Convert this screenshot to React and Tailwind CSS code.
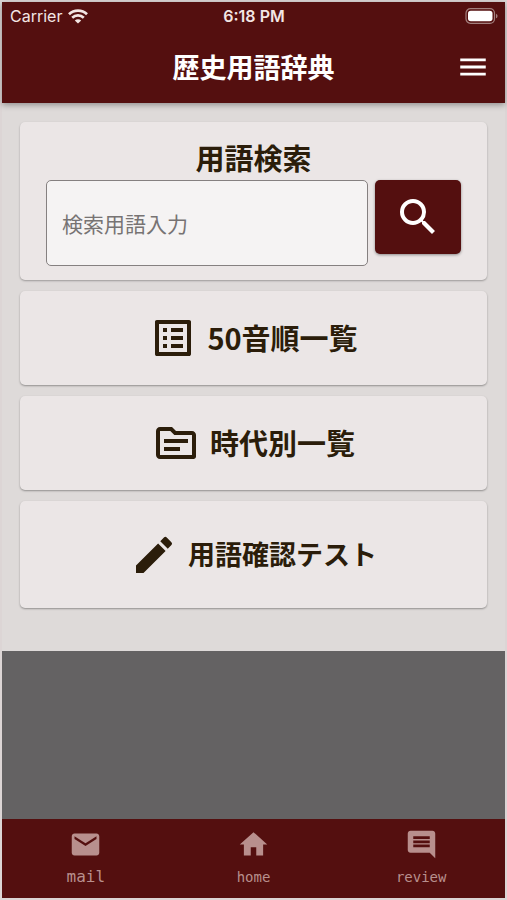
import React from 'react';
import {
  MdComment,
  MdEdit,
  MdHome,
  MdListAlt,
  MdMail,
  MdMenu,
  MdOutlineTopic,
  MdSearch,
} from 'react-icons/md';

const menuItems = [
  { label: '50音順一覧', icon: MdListAlt, size: 'h-[94px] text-[29px]' },
  { label: '時代別一覧', icon: MdOutlineTopic, size: 'h-[94px] text-[29px]' },
  { label: '用語確認テスト', icon: MdEdit, size: 'h-[107px] text-[27px]' },
];

const tabs = [
  { label: 'mail', icon: MdMail, size: 'text-[16px]' },
  { label: 'home', icon: MdHome, size: 'text-[14px]' },
  { label: 'review', icon: MdComment, size: 'text-[14px]' },
];

const StatusBar = () => (
  <div className="grid h-[28px] grid-cols-3 items-center pl-2 pr-[7px] font-['Inter',sans-serif] text-[16px] text-[#f3e6e4]">
    <div className="flex items-center gap-[6px]">
      <span>Carrier</span>
      <svg viewBox="0 0 20 15" className="h-[15px] w-[20px]" fill="none" stroke="currentColor" strokeWidth="2.7">
        <path d="M1 5.2C6 .3 14 .3 19 5.2" />
        <path d="M4.2 8.7c3.3-3.1 8.3-3.1 11.6 0" />
        <path d="M10 14.6 6.8 11.4c1.8-1.6 4.6-1.6 6.4 0z" fill="currentColor" stroke="none" />
      </svg>
    </div>
    <span className="text-center font-semibold">6:18 PM</span>
    <svg viewBox="0 0 33 16" className="h-[16px] w-[33px] justify-self-end">
      <rect x="1" y=".7" width="28.5" height="14.6" rx="4.5" fill="none" stroke="#a37f7d" strokeWidth="1.2" />
      <rect x="3" y="2.7" width="24.5" height="10.6" rx="2.8" fill="#fff" />
      <path d="M31 5.7c2 .8 2 3.8 0 4.6z" fill="#a37f7d" />
    </svg>
  </div>
);

const Header = () => (
  <header className="relative bg-[#540f0f] text-white shadow-[0_2px_6px_rgba(0,0,0,0.35)]">
    <StatusBar />
    <div className="grid h-[73px] grid-cols-[1fr_auto_1fr] items-center px-[15px]">
      <h1 className="col-start-2 text-[27px] font-bold leading-8">歴史用語辞典</h1>
      <button type="button" aria-label="menu" className="justify-self-end">
        <MdMenu className="size-[34px]" />
      </button>
    </div>
  </header>
);

const SearchCard = () => (
  <form
    className="rounded-[5px] bg-[#ebe6e6] px-[26px] pb-[14px] pt-[15px] shadow-[0_1px_2px_rgba(0,0,0,0.3)]"
    onSubmit={(e) => e.preventDefault()}
  >
    <label htmlFor="term" className="mb-[3px] block text-center text-[29px] font-bold leading-10">
      用語検索
    </label>
    <div className="flex items-start gap-[7px]">
      <input
        id="term"
        type="text"
        placeholder="検索用語入力"
        className="h-[86px] min-w-0 flex-1 rounded-[5px] border border-[#858080] bg-[#f5f3f3] px-[15px] text-[21px] placeholder:text-[#777373]"
      />
      <button
        type="submit"
        aria-label="search"
        className="flex h-[74px] w-[86px] items-center justify-center rounded-[5px] bg-[#540f0f] text-white shadow-[0_1px_3px_rgba(0,0,0,0.4)]"
      >
        <MdSearch className="size-[48px]" />
      </button>
    </div>
  </form>
);

const App = () => {
  return (
    <div className="flex min-h-screen flex-col border-2 border-[#dcd5d5] bg-[#646263] font-['Noto_Sans_CJK_JP',sans-serif] text-[#2b1d0a]">
      <Header />

      <main className="flex flex-col gap-[11px] bg-[#dedad9] px-[18px] pb-[43px] pt-[19px]">
        <SearchCard />
        {menuItems.map(({ label, icon: Icon, size }) => (
          <button
            key={label}
            type="button"
            className={`flex items-center justify-center gap-[10px] rounded-[5px] bg-[#ebe6e6] font-bold shadow-[0_1px_2px_rgba(0,0,0,0.35)] ${size}`}
          >
            <Icon className="size-[48px]" />
            <span>{label}</span>
          </button>
        ))}
      </main>

      {/* Bottom tab bar */}
      <nav className="mt-auto grid h-[79px] grid-cols-3 bg-[#540f0f] text-[#b88f8d]">
        {tabs.map(({ label, icon: Icon, size }) => (
          <a
            key={label}
            href={`#${label}`}
            className={`flex flex-col items-center gap-[6px] pt-[9px] font-['DejaVu_Sans_Mono',monospace] leading-5 ${size}`}
          >
            <Icon className="size-[33px]" />
            <span>{label}</span>
          </a>
        ))}
      </nav>
    </div>
  );
};

export default App;
